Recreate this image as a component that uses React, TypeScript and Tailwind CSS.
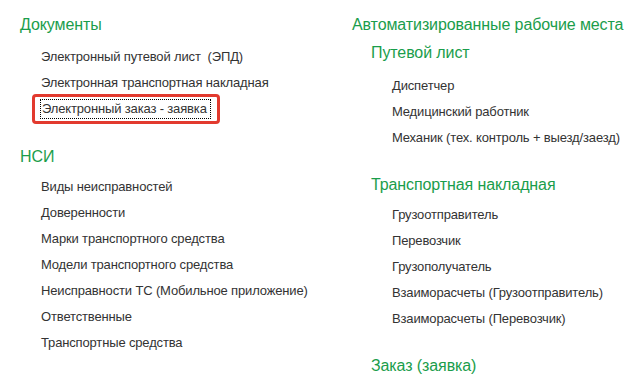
const green = "text-[#1a9d4b]";

function Heading({ children, className = "" }: { children: React.ReactNode; className?: string }) {
  return (
    <div className={`${green} text-[16px] leading-[20px] whitespace-nowrap tracking-[-0.1px] ${className}`}>{children}</div>
  );
}

function Item({ children, selected = false }: { children: React.ReactNode; selected?: boolean }) {
  if (selected) {
    return (
      <div className="h-[26px] flex items-center">
        <div className="-ml-[9px] rounded-[4px] border-[3px] border-[#e23a2f] pl-[5px] pr-[6px] py-[2px]">
          <span className="border border-dotted border-black pl-[1px] pr-[3px] leading-[18px] block whitespace-nowrap">
            {children}
          </span>
        </div>
      </div>
    );
  }
  return <div className="h-[26px] flex items-center whitespace-nowrap">{children}</div>;
}

export default function App() {
  return (
    <div
      className="w-[640px] h-[380px] bg-white overflow-hidden flex text-[13px] tracking-[-0.15px] text-[#333333]"
      style={{ fontFamily: '"Liberation Sans", Arial, sans-serif' }}
    >
      <div className="w-[352px] pl-[20px] pt-[15px] flex flex-col">
        <Heading>Документы</Heading>
        <div className="pl-[21px] mt-[9px] flex flex-col">
          <Item>Электронный путевой лист&nbsp; (ЭПД)</Item>
          <Item>Электронная транспортная накладная</Item>
          <Item selected>Электронный заказ - заявка</Item>
        </div>
        <Heading className="mt-[25px]">НСИ</Heading>
        <div className="pl-[21px] mt-[7px] flex flex-col">
          <Item>Виды неисправностей</Item>
          <Item>Доверенности</Item>
          <Item>Марки транспортного средства</Item>
          <Item>Модели транспортного средства</Item>
          <Item>Неисправности ТС (Мобильное приложение)</Item>
          <Item>Ответственные</Item>
          <Item>Транспортные средства</Item>
        </div>
      </div>
      <div className="flex-1 pt-[15px] flex flex-col">
        <Heading>Автоматизированные рабочие места</Heading>
        <div className="pl-[19px] mt-[8px] flex flex-col">
          <Heading>Путевой лист</Heading>
          <div className="pl-[21px] mt-[10px] flex flex-col">
            <Item>Диспетчер</Item>
            <Item>Медицинский работник</Item>
            <Item>Механик (тех. контроль + выезд/заезд)</Item>
          </div>
          <Heading className="mt-[24px]">Транспортная накладная</Heading>
          <div className="pl-[21px] mt-[7px] flex flex-col">
            <Item>Грузоотправитель</Item>
            <Item>Перевозчик</Item>
            <Item>Грузополучатель</Item>
            <Item>Взаиморасчеты (Грузоотправитель)</Item>
            <Item>Взаиморасчеты (Перевозчик)</Item>
          </div>
          <Heading className="mt-[24px]">Заказ (заявка)</Heading>
        </div>
      </div>
    </div>
  );
}
